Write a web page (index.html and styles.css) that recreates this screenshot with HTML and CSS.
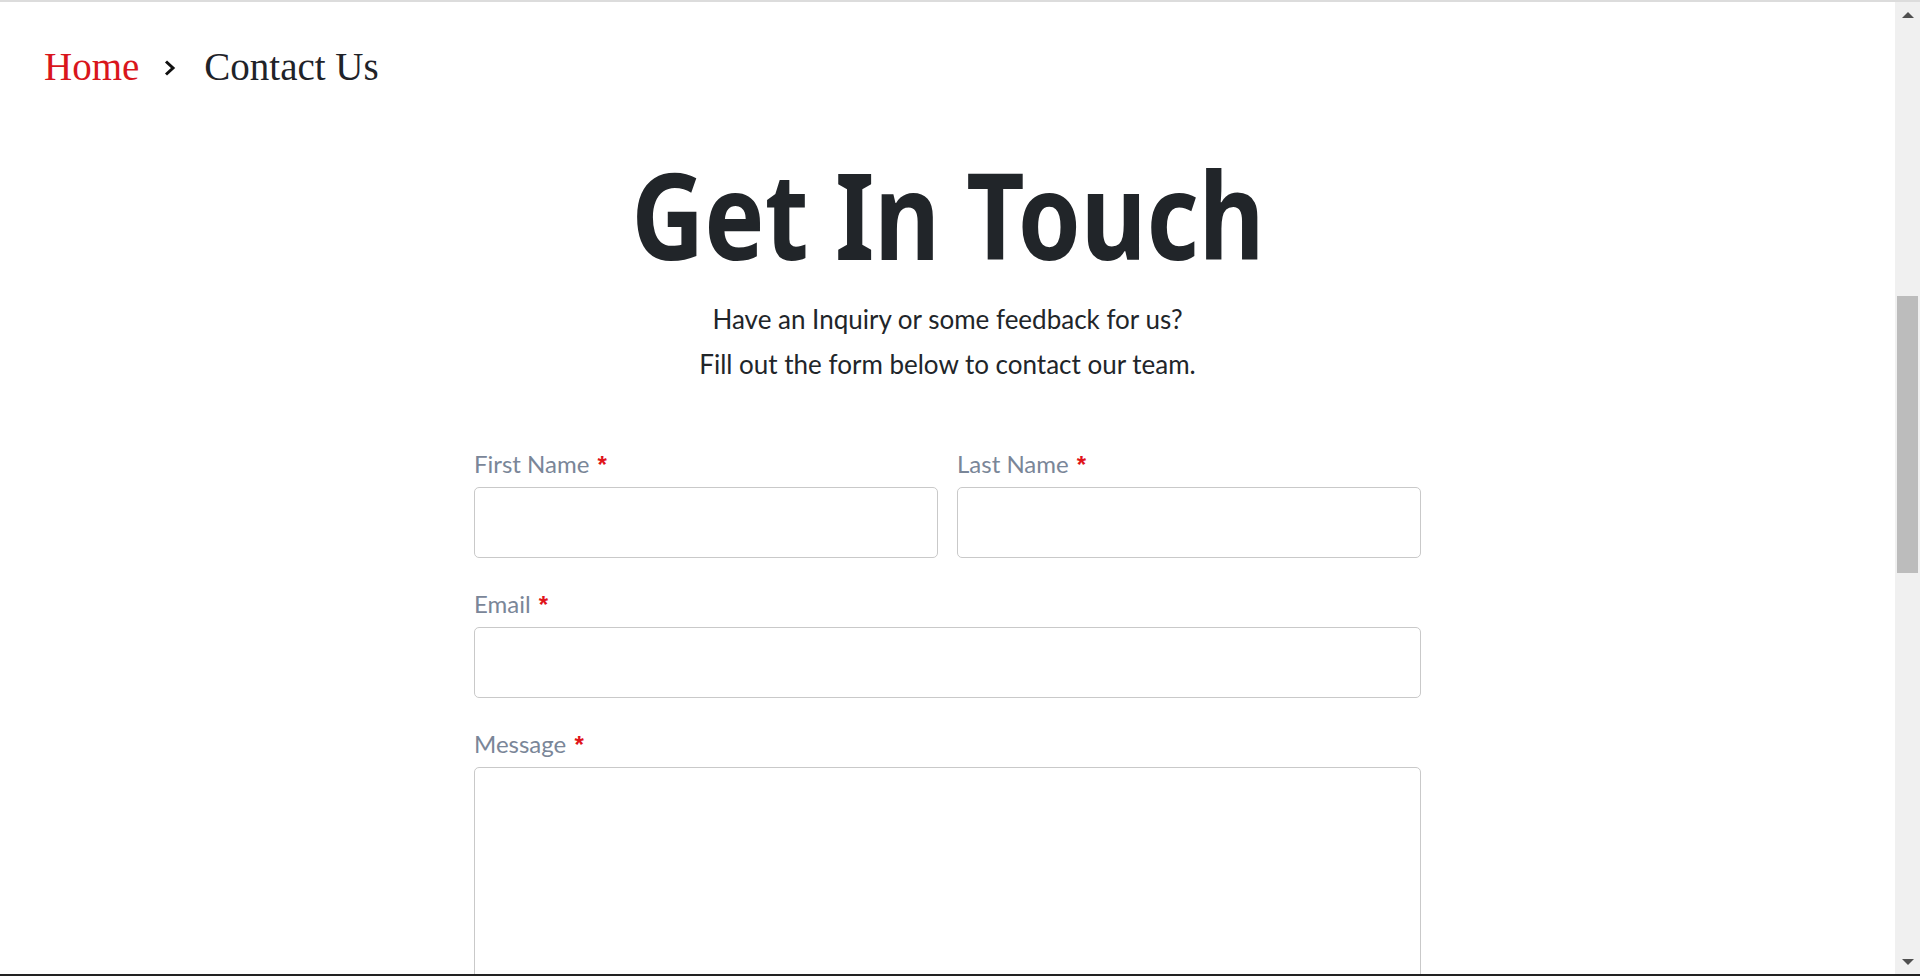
FILE: index.html
```html
<!DOCTYPE html>
<html lang="en">
<head>
<meta charset="utf-8">
<title>Contact Us</title>
<link rel="stylesheet" href="styles.css">
</head>
<body>
<div class="window">
  <div class="topline"></div>
  <div class="main">
    <div class="page">
      <nav class="breadcrumb">
        <a class="crumb-home" href="#">Home</a>
        <svg class="crumb-sep" width="13" height="18" viewBox="0 0 13 18"><polyline points="3,2.5 10,9 3,15.5" fill="none" stroke="#111" stroke-width="3" stroke-linecap="butt" stroke-linejoin="miter"/></svg>
        <span class="crumb-current">Contact Us</span>
      </nav>
      <h1 class="title"><span class="title-text">Get In Touch</span></h1>
      <p class="subtitle">Have an Inquiry or some feedback for us?<br>Fill out the form below to contact our team.</p>
      <form class="form">
        <div class="row">
          <div class="group">
            <label class="label">First Name <span class="req">*</span></label>
            <input class="input" type="text">
          </div>
          <div class="group">
            <label class="label">Last Name <span class="req">*</span></label>
            <input class="input" type="text">
          </div>
        </div>
        <div class="group">
          <label class="label">Email <span class="req">*</span></label>
          <input class="input" type="email">
        </div>
        <div class="group">
          <label class="label">Message <span class="req">*</span></label>
          <textarea class="input textarea"></textarea>
        </div>
      </form>
    </div>
    <div class="scrollbar">
      <div class="sb-btn"><span class="tri-up"></span></div>
      <div class="sb-track"><div class="sb-thumb"></div></div>
      <div class="sb-btn"><span class="tri-down"></span></div>
    </div>
  </div>
  <div class="bottomline"></div>
</div>
</body>
</html>
```
FILE: styles.css
```css
html, body {
  margin: 0;
  padding: 0;
  background: #fff;
}
body {
  width: 1920px;
  height: 976px;
  overflow: hidden;
}
.window {
  display: flex;
  flex-direction: column;
  height: 976px;
}
.topline {
  height: 2px;
  background: #dcdcdc;
  flex: none;
}
.bottomline {
  height: 2px;
  background: #222;
  flex: none;
}
.main {
  flex: 1;
  min-height: 0;
  display: flex;
}
.page {
  flex: 1;
  overflow: hidden;
  background: #fff;
}
.breadcrumb {
  display: flex;
  align-items: center;
  padding: 43px 0 0 44px;
  height: 44px;
  font-family: "Liberation Serif", serif;
  font-size: 39px;
  line-height: 44px;
}
.crumb-home {
  color: #d9161c;
  text-decoration: none;
}
.crumb-sep {
  margin: 2px 28px 0 24px;
  flex: none;
}
.crumb-current {
  color: #1f2329;
}
.title {
  margin: 62px 0 0;
  height: 124px;
  text-align: center;
  font-family: "Noto Sans", "DejaVu Sans Condensed", sans-serif;
  font-weight: 700;
  font-size: 121px;
  line-height: 124px;
  color: #212529;
}
.title-text {
  display: inline-block;
  transform: scaleX(0.836);
  transform-origin: 50% 50%;
}
.subtitle {
  margin: 22px 0 0;
  text-align: center;
  font-family: Lato, "Liberation Sans", sans-serif;
  font-size: 26px;
  line-height: 45px;
  color: #212529;
}
.form {
  width: 947px;
  margin: 62px auto 0;
}
.row {
  display: grid;
  grid-template-columns: 1fr 1fr;
  column-gap: 19px;
}
.group {
  display: flex;
  flex-direction: column;
  margin-bottom: 31px;
}
.label {
  display: block;
  flex: none;
  height: 29px;
  overflow: visible;
  font-family: Lato, "Liberation Sans", sans-serif;
  font-size: 24px;
  line-height: 29px;
  color: #7a8698;
  margin-bottom: 9px;
}
.req {
  color: #e0141a;
  font-family: "Liberation Sans", sans-serif;
  font-weight: 700;
  font-size: 24px;
  line-height: 1;
  margin-left: 2px;
}
.input {
  box-sizing: border-box;
  flex: none;
  height: 71px;
  width: 100%;
  border: 1px solid #c9c9c9;
  border-radius: 5px;
  background: #fff;
  margin: 0;
  padding: 0 14px;
  font: inherit;
}
.textarea {
  height: 260px;
  resize: none;
}
.scrollbar {
  width: 25px;
  flex: none;
  display: flex;
  flex-direction: column;
  background: #f0f0f0;
}
.sb-btn {
  height: 25px;
  flex: none;
  display: flex;
  align-items: center;
  justify-content: center;
}
.tri-up {
  width: 0;
  height: 0;
  border-left: 6px solid transparent;
  border-right: 6px solid transparent;
  border-bottom: 6px solid #505050;
}
.tri-down {
  width: 0;
  height: 0;
  border-left: 6px solid transparent;
  border-right: 6px solid transparent;
  border-top: 6px solid #505050;
}
.sb-track {
  flex: 1;
  padding-top: 269px;
}
.sb-thumb {
  height: 277px;
  margin: 0 2px;
  background: #bcbcbc;
}
```
